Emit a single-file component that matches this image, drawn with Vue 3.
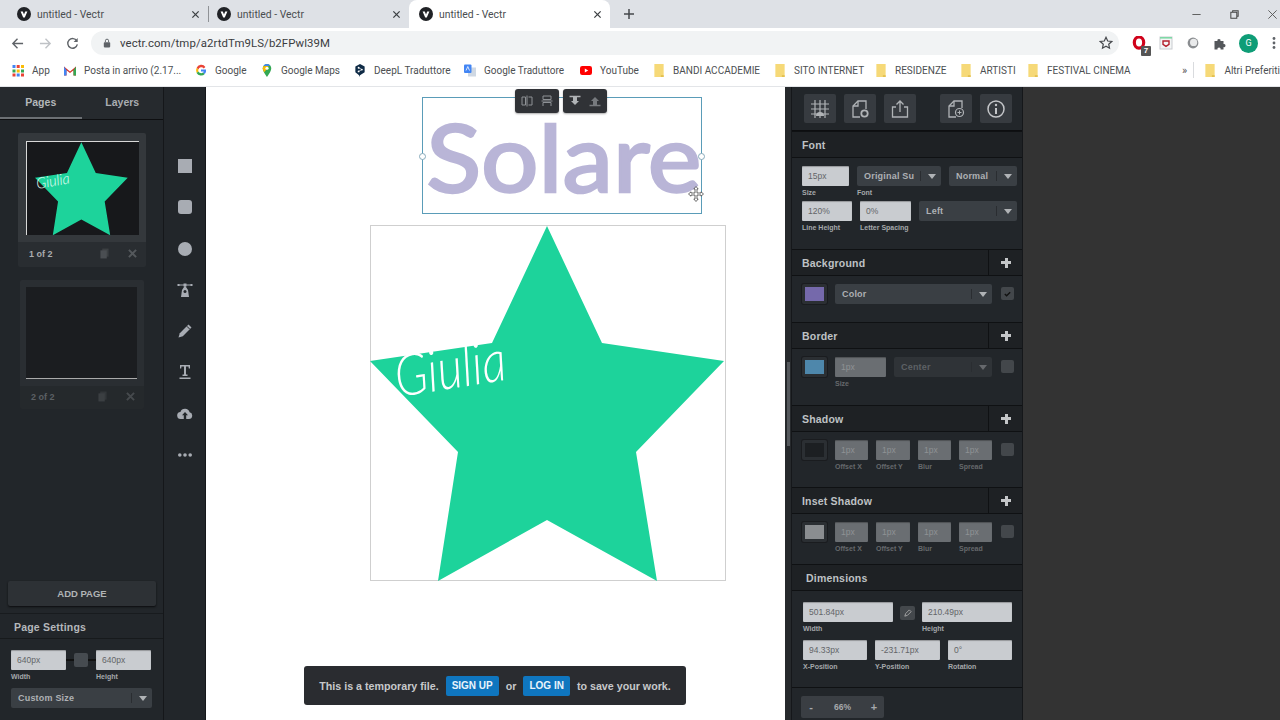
<script setup>
const tabs = [{ active: false }, { active: false }, { active: true }]
const bookmarks = [
  { icon: 'apps', label: 'App', w: 52 },
  { icon: 'gmail', label: 'Posta in arrivo (2.17...', w: 131 },
  { icon: 'g', label: 'Google', w: 66 },
  { icon: 'maps', label: 'Google Maps', w: 93 },
  { icon: 'deepl', label: 'DeepL Traduttore', w: 110 },
  { icon: 'trans', label: 'Google Traduttore', w: 116 },
  { icon: 'yt', label: 'YouTube', w: 73 },
  { icon: 'folder', label: 'BANDI ACCADEMIE', w: 121 },
  { icon: 'folder', label: 'SITO INTERNET', w: 101 },
  { icon: 'folder', label: 'RESIDENZE', w: 85 },
  { icon: 'folder', label: 'ARTISTI', w: 67 },
  { icon: 'folder', label: 'FESTIVAL CINEMA', w: 151 }
]
const shadowFields = [
  { label: 'Offset X', w: 33 },
  { label: 'Offset Y', w: 34 },
  { label: 'Blur', w: 33 },
  { label: 'Spread', w: 33 }
]
const star = '176,0 231,117 353,135 265,226 286,355 176,294 67,355 87,226 -1,135 121,117'
</script>

<template>
  <div class="app">
    <div class="tabbar">
      <div v-for="(t, i) in tabs" :key="i" class="tab" :class="{ active: t.active }">
        <svg class="fav" viewBox="0 0 14 14"><circle cx="7" cy="7" r="7" fill="#202226"/><path d="M3.6 4.4h2.2L7 7.6l1.2-3.2h2.2L7.8 10.4H6.2z" fill="#fff"/></svg>
        <span class="tab-title">untitled - Vectr</span>
        <svg class="tab-x" viewBox="0 0 10 10"><path d="M1.5 1.5l7 7M8.5 1.5l-7 7" stroke="#3c4043" stroke-width="1.4"/></svg>
      </div>
      <svg class="newtab" viewBox="0 0 12 12"><path d="M6 1v10M1 6h10" stroke="#45484c" stroke-width="1.5"/></svg>
      <div class="winctl">
        <svg viewBox="0 0 12 12"><path d="M1.5 6h9" stroke="#555" stroke-width="1"/></svg>
        <svg viewBox="0 0 12 12"><path d="M2 3.5h6.5V10H2zM4 3.5V2h6v6H8.5" fill="none" stroke="#444" stroke-width="1.1"/></svg>
        <svg viewBox="0 0 12 12"><path d="M1.5 1.5l9 9M10.5 1.5l-9 9" stroke="#555" stroke-width="1"/></svg>
      </div>
    </div>

    <div class="toolbar">
      <svg class="nav" viewBox="0 0 14 14"><path d="M13 7H2M7 2L2 7l5 5" fill="none" stroke="#5f6368" stroke-width="1.5"/></svg>
      <svg class="nav fwd" viewBox="0 0 14 14"><path d="M1 7h11M7 2l5 5-5 5" fill="none" stroke="#bfc2c6" stroke-width="1.5"/></svg>
      <svg class="nav rel" viewBox="0 0 14 14"><path d="M11.6 4.2A5.2 5.2 0 1 0 12.2 8" fill="none" stroke="#5f6368" stroke-width="1.5"/><path d="M12.6 1v4.4H8.2z" fill="#5f6368"/></svg>
      <div class="omnibox">
        <svg class="lock" viewBox="0 0 10 12"><rect x="1" y="5" width="8" height="6.5" rx="1" fill="#5f6368"/><path d="M3 5V3.2a2 2 0 0 1 4 0V5" fill="none" stroke="#5f6368" stroke-width="1.2"/></svg>
        <span class="url">vectr.com/tmp/a2rtdTm9LS/b2FPwl39M</span>
        <svg class="star-ic" viewBox="0 0 14 14"><path d="M7 1.3l1.7 3.7 4 .5-3 2.7.8 4L7 10.2l-3.5 2 .8-4-3-2.7 4-.5z" fill="none" stroke="#45484c" stroke-width="1.2"/></svg>
      </div>
      <div class="exts">
        <div class="ext opera">
          <svg viewBox="0 0 14 16"><ellipse cx="7" cy="7" rx="5" ry="6" fill="none" stroke="#d0021b" stroke-width="3.4"/></svg>
          <span class="badge">7</span>
        </div>
        <svg class="ext" viewBox="0 0 14 14"><rect x="1" y="1" width="12" height="12" fill="#f4f6f6" stroke="#c9ccd0"/><path d="M1 1h12v1.6H1z" fill="#7fd8a6"/><path d="M4 5h6v3.4L7 10.4 4 8.4z" fill="none" stroke="#b3202c" stroke-width="1.4"/></svg>
        <svg class="ext" viewBox="0 0 14 14"><circle cx="7" cy="7" r="5.4" fill="#8a8d90"/><circle cx="7.6" cy="6.4" r="3.6" fill="#e9eaeb"/></svg>
        <svg class="ext" viewBox="0 0 14 14"><path d="M1.5 5H4.4a1.6 1.6 0 1 1 3.1 0h3v3a1.6 1.6 0 1 1 0 3.1V13.5H7.6a1.6 1.6 0 1 0-3.1 0H1.5z" fill="#54575b"/></svg>
        <div class="avatar">G</div>
        <svg class="ext menu" viewBox="0 0 4 14"><circle cx="2" cy="2.5" r="1.4" fill="#5f6368"/><circle cx="2" cy="7" r="1.4" fill="#5f6368"/><circle cx="2" cy="11.5" r="1.4" fill="#5f6368"/></svg>
      </div>
    </div>

    <div class="bookmarks">
      <div v-for="b in bookmarks" :key="b.label" class="bm" :style="{ width: b.w + 'px' }">
        <svg v-if="b.icon === 'apps'" class="bm-ic" viewBox="0 0 12 12">
          <g fill="#4285f4"><rect x="0.5" y="0.5" width="3" height="3"/><rect x="9" y="5" width="3" height="3" fill="#34a853"/></g>
          <rect x="4.7" y="0.5" width="3" height="3" fill="#ea4335"/><rect x="9" y="0.5" width="3" height="3" fill="#fbbc05"/>
          <rect x="0.5" y="5" width="3" height="3" fill="#34a853"/><rect x="4.7" y="5" width="3" height="3" fill="#fbbc05"/>
          <rect x="0.5" y="9" width="3" height="3" fill="#ea4335"/><rect x="4.7" y="9" width="3" height="3" fill="#4285f4"/><rect x="9" y="9" width="3" height="3" fill="#ea4335"/>
        </svg>
        <svg v-else-if="b.icon === 'gmail'" class="bm-ic" viewBox="0 0 12 12"><path d="M0 2l6 5 6-5v9H9.5V5.8L6 8.6 2.5 5.8V11H0z" fill="#d93025"/><path d="M0 2v9h2.5V5.8z" fill="#4285f4"/><path d="M12 2v9H9.5V5.8z" fill="#34a853"/></svg>
        <svg v-else-if="b.icon === 'g'" class="bm-ic" viewBox="0 0 12 12"><path d="M10.4 2.4A5 5 0 0 0 1.6 3.6L3.4 5a3 3 0 0 1 5.3-1z" fill="#ea4335"/><path d="M1.6 3.6a5 5 0 0 0 0 4.8L3.4 7a3 3 0 0 1 0-2z" fill="#fbbc05"/><path d="M1.6 8.4a5 5 0 0 0 8.2 1L8 8a3 3 0 0 1-4.6-1z" fill="#34a853"/><path d="M11 5H6v2h2.8A2.6 2.6 0 0 1 8 8l1.8 1.4A5 5 0 0 0 11 5z" fill="#4285f4"/></svg>
        <svg v-else-if="b.icon === 'maps'" class="bm-ic" viewBox="0 0 12 14"><path d="M6 0a4.6 4.6 0 0 0-4.6 4.6C1.4 8 6 14 6 14s4.6-6 4.6-9.4A4.6 4.6 0 0 0 6 0z" fill="#34a853"/><path d="M2 2.4L9.800 2A4.600 4.600 0 0 0 6 0a4.600 4.600 0 0 0-4 2.400z" fill="#4285f4"/><path d="M1.400 4.600c0 1.200.6 2.700 1.500 4.200L8 3 6 2.200 2 2.400z" fill="#fbbc05"/><circle cx="6" cy="4.600" r="1.700" fill="#fff"/></svg>
        <svg v-else-if="b.icon === 'deepl'" class="bm-ic" viewBox="0 0 12 14"><path d="M6 0l5 2.800v6L6 12l-1 2v-2L1 8.800v-6z" fill="#0f2b46"/><circle cx="4.500" cy="4" r="1" fill="#fff"/><circle cx="4.500" cy="8" r="1" fill="#fff"/><circle cx="8" cy="6" r="1" fill="#fff"/><path d="M4.500 4L8 6 4.500 8" fill="none" stroke="#fff" stroke-width=".7"/></svg>
        <svg v-else-if="b.icon === 'trans'" class="bm-ic" viewBox="0 0 12 12"><rect x="4" y="3" width="8" height="9" fill="#cfd8e3"/><rect x="0" y="0" width="7.500" height="8.500" rx="1" fill="#4285f4"/><path d="M2 6l1.800-4L5.500 6" fill="none" stroke="#fff" stroke-width=".8"/></svg>
        <svg v-else-if="b.icon === 'yt'" class="bm-ic" viewBox="0 0 12 12"><rect x="0" y="1.500" width="12" height="9" rx="2.200" fill="#f00"/><path d="M4.800 4l3.400 2-3.400 2z" fill="#fff"/></svg>
        <svg v-else class="bm-ic" viewBox="0 0 12 14"><path d="M1 0h10v14H1z" fill="#f6d978"/><path d="M8 12h3v2H8z" fill="#e3c04f"/></svg>
        <span>{{ b.label }}</span>
      </div>
      <span class="more">»</span>
      <div class="bm-sep"></div>
      <div class="bm">
        <svg class="bm-ic" viewBox="0 0 12 14"><path d="M1 0h10v14H1z" fill="#f6d978"/><path d="M8 12h3v2H8z" fill="#e3c04f"/></svg>
        <span>Altri Preferiti</span>
      </div>
    </div>

    <div class="main">
      <aside class="left">
        <div class="ltabs">
          <div class="ltab on">Pages</div>
          <div class="ltab">Layers</div>
        </div>
        <div class="pages">
          <div class="card">
            <div class="thumb-wrap">
              <div class="thumb">
                <svg class="thumb-star" viewBox="-1 0 355 356">
                  <polygon :points="star" fill="#1dd39b"/>
                  <text x="8" y="178" transform="rotate(-10 8 178) translate(8 178) scale(.95 1) translate(-8 -178)" class="thumb-name">Giulia</text>
                </svg>
              </div>
            </div>
            <div class="card-foot">
              <span>1 of 2</span>
              <svg class="foot-copy" viewBox="0 0 10 12"><rect x="2.500" y="0.500" width="7" height="9" fill="#3c4043"/><rect x="0.500" y="2.500" width="7" height="9" fill="#4a4e52"/></svg>
              <svg class="foot-x" viewBox="0 0 10 10"><path d="M1 1l8 8M9 1l-8 8" stroke="#54585c" stroke-width="2.200"/></svg>
            </div>
          </div>
          <div class="card dim">
            <div class="thumb-wrap">
              <div class="thumb"></div>
            </div>
            <div class="card-foot">
              <span>2 of 2</span>
              <svg class="foot-copy" viewBox="0 0 10 12"><rect x="2.500" y="0.500" width="7" height="9" fill="#3c4043"/><rect x="0.500" y="2.500" width="7" height="9" fill="#4a4e52"/></svg>
              <svg class="foot-x" viewBox="0 0 10 10"><path d="M1 1l8 8M9 1l-8 8" stroke="#54585c" stroke-width="2.200"/></svg>
            </div>
          </div>
        </div>
        <div class="add-wrap"><div class="add">ADD PAGE</div></div>
        <div class="ps-head">Page Settings</div>
        <div class="ps-body">
          <div class="ps-row">
            <div class="col"><div class="fld w56">640px</div><label>Width</label></div>
            <div class="ps-link"><i></i></div>
            <div class="col"><div class="fld w56">640px</div><label>Height</label></div>
          </div>
          <div class="sel ps-sel">Custom Size</div>
        </div>
      </aside>

      <nav class="rail">
        <svg viewBox="0 0 16 16"><rect x="1" y="1" width="14" height="14" fill="#a8acb3"/></svg>
        <svg viewBox="0 0 16 16"><rect x="1" y="1" width="14" height="14" rx="3" fill="#a8acb3"/></svg>
        <svg viewBox="0 0 16 16"><circle cx="8" cy="8" r="7" fill="#a8acb3"/></svg>
        <svg viewBox="0 0 16 16"><path d="M1 3h14" stroke="#a8acb3" stroke-width="1"/><rect x="0.500" y="2" width="2" height="2" fill="#a8acb3"/><rect x="13.500" y="2" width="2" height="2" fill="#a8acb3"/><path d="M8 3.500l3 4.500 1 7H4l1-7z" fill="#a8acb3"/><circle cx="8" cy="9.500" r="1.500" fill="#22262a"/><rect x="6.500" y="1.500" width="3" height="3" fill="#a8acb3"/></svg>
        <svg viewBox="0 0 16 16"><path d="M11.500 1.500l3 3-8.700 8.700-4.300 1.300 1.300-4.300z" fill="#a8acb3"/><path d="M9.800 3.200l3 3" stroke="#22262a" stroke-width="1"/></svg>
        <svg viewBox="0 0 16 16"><path d="M3 1h10v3.500h-1.200L11.500 2.500H9v8h1.500V12h-5v-1.500H7v-8H4.500L4.200 4.500H3z" fill="#a8acb3"/><rect x="2.500" y="13.500" width="11" height="1.500" fill="#a8acb3"/></svg>
        <svg viewBox="0 0 16 16"><path d="M4 13a3.500 3.500 0 0 1-.6-7 4.800 4.800 0 0 1 9.200 0.300A3.400 3.400 0 0 1 12 13z" fill="#a8acb3"/><path d="M8 6l3 3.200H9.200V13H6.800V9.200H5z" fill="#22262a"/></svg>
        <svg viewBox="0 0 16 16"><circle cx="2.800" cy="8" r="1.800" fill="#a8acb3"/><circle cx="8" cy="8" r="1.800" fill="#a8acb3"/><circle cx="13.200" cy="8" r="1.800" fill="#a8acb3"/></svg>
      </nav>

      <div class="canvas">
        <div class="art">
          <svg class="art-star" viewBox="0 0 354 354">
            <polygon :points="star" fill="#1dd39b"/>
            <text x="27" y="171" transform="rotate(-9 27 171) translate(27 171) scale(.83 1) translate(-27 -171)" class="art-name">Giulia</text>
          </svg>
        </div>
        <div class="selbox">
          <span class="solare">Solare</span>
          <i class="handle hl"></i>
          <i class="handle hr"></i>
        </div>
        <div class="float">
          <div class="fgroup">
            <svg viewBox="0 0 12 12"><path d="M1 2h3.500v8H1zM7.500 2H11v8H7.500M6 0.500v11" fill="none" stroke="#8e9195"/></svg>
            <svg viewBox="0 0 12 12"><path d="M2 1h8v3.500H2zM2 11V7.500h8V11M0.500 6h11" fill="none" stroke="#8e9195"/></svg>
          </div>
          <div class="fgroup">
            <svg viewBox="0 0 12 12"><path d="M0.500 1.500h11" stroke="#b0b3b6" stroke-width="1.500"/><path d="M4 2h4v4h2L6 10 2 6h2z" fill="#b0b3b6"/></svg>
            <svg viewBox="0 0 12 12"><path d="M0.500 10.500h11" stroke="#777a7e" stroke-width="1.500"/><path d="M4 10V6H2l4-4 4 4H8v4z" fill="#777a7e"/></svg>
          </div>
        </div>
        <svg class="cursor" viewBox="0 0 16 16"><path d="M8 .5l2.200 2.500H9v4h4V5.800L15.500 8 13 10.200V9H9v4h1.200L8 15.500 5.800 13H7V9H3v1.200L.5 8 3 5.800V7h4V3H5.800z" fill="#fff" stroke="#444" stroke-width=".8"/></svg>
        <div class="notice">
          <span>This is a temporary file.</span>
          <b class="cta su">SIGN UP</b>
          <span>or</span>
          <b class="cta">LOG IN</b>
          <span>to save your work.</span>
        </div>
      </div>

      <div class="scroll"><i></i></div>

      <aside class="right">
        <div class="rtools">
          <div class="rbtn"><svg viewBox="0 0 20 20"><path d="M5 1v18M10 1v18M15 1v18M1 5h18M1 10h18M1 15h18" stroke="#b0b3b6" stroke-width="1.200"/><path d="M6 17a4 4 0 0 1 8 0z" fill="#b0b3b6"/></svg></div>
          <div class="rbtn"><svg viewBox="0 0 20 20"><path d="M10 18H3V7l5-5h8v8" fill="none" stroke="#b0b3b6" stroke-width="1.300"/><path d="M3 7h5V2" fill="none" stroke="#b0b3b6" stroke-width="1.300"/><circle cx="14.500" cy="14.500" r="3.200" fill="none" stroke="#b0b3b6" stroke-width="1.800"/></svg></div>
          <div class="rbtn"><svg viewBox="0 0 20 20"><path d="M6 8H2.500v10h15V8H14" fill="none" stroke="#b0b3b6" stroke-width="1.300"/><path d="M10 13V2M6.500 5.500L10 2l3.500 3.500" fill="none" stroke="#b0b3b6" stroke-width="1.300"/></svg></div>
          <div class="rbtn gap"><svg viewBox="0 0 20 20"><path d="M10 18H3V7l5-5h8v7" fill="none" stroke="#b0b3b6" stroke-width="1.300"/><path d="M3 7h5V2" fill="none" stroke="#b0b3b6" stroke-width="1.300"/><circle cx="13.500" cy="13.500" r="4" fill="none" stroke="#b0b3b6" stroke-width="1.200"/><path d="M13.500 11.500v4M11.500 13.500h4" stroke="#b0b3b6"/></svg></div>
          <div class="rbtn"><svg viewBox="0 0 20 20"><circle cx="10" cy="10" r="8" fill="none" stroke="#c4c6c9" stroke-width="1.500"/><circle cx="10" cy="6" r="1.200" fill="#c4c6c9"/><path d="M10 9v6" stroke="#c4c6c9" stroke-width="2"/></svg></div>
        </div>

        <div class="head">Font</div>
        <div class="body font-b">
          <div class="row">
            <div class="col"><div class="fld" style="width:47px">15px</div><label>Size</label></div>
            <div class="col"><div class="sel" style="width:84px">Original Su</div><label>Font</label></div>
            <div class="col"><div class="sel" style="width:68px">Normal</div></div>
          </div>
          <div class="row">
            <div class="col"><div class="fld" style="width:50px">120%</div><label>Line Height</label></div>
            <div class="col"><div class="fld" style="width:51px">0%</div><label>Letter Spacing</label></div>
            <div class="col"><div class="sel" style="width:98px">Left</div></div>
          </div>
        </div>

        <div class="head plus">Background<em></em></div>
        <div class="body bg-b">
          <div class="row">
            <div class="swatch"><i class="s-purple"></i></div>
            <div class="sel" style="width:157px">Color</div>
            <div class="chk on"><svg viewBox="0 0 10 10"><path d="M2 5.500l2 2 4-4" fill="none" stroke="#111" stroke-width="1.500"/></svg></div>
          </div>
        </div>

        <div class="head plus">Border<em></em></div>
        <div class="body sh-b">
          <div class="row">
            <div class="swatch"><i class="s-blue"></i></div>
            <div class="col"><div class="fld off" style="width:51px">1px</div><label class="l-off">Size</label></div>
            <div class="sel off" style="width:98px">Center</div>
            <div class="chk"></div>
          </div>
        </div>

        <div class="head plus">Shadow<em></em></div>
        <div class="body sh-c">
          <div class="row">
            <div class="swatch"><i class="s-none"></i></div>
            <div v-for="f in shadowFields" :key="f.label" class="col"><div class="fld off" :style="{ width: f.w + 'px' }">1px</div><label class="l-off">{{ f.label }}</label></div>
            <div class="chk"></div>
          </div>
        </div>

        <div class="head plus">Inset Shadow<em></em></div>
        <div class="body inset-b">
          <div class="row">
            <div class="swatch"><i class="s-grey"></i></div>
            <div v-for="f in shadowFields" :key="f.label" class="col"><div class="fld off" :style="{ width: f.w + 'px' }">1px</div><label class="l-off">{{ f.label }}</label></div>
            <div class="chk"></div>
          </div>
        </div>

        <div class="head dim-h">Dimensions</div>
        <div class="body dim-b">
          <div class="row dr">
            <div class="col"><div class="fld" style="width:90px">501.84px</div><label>Width</label></div>
            <div class="link"><svg viewBox="0 0 10 10"><path d="M2 8l1-3 4-4 2 2-4 4z" fill="none" stroke="#aaa"/></svg></div>
            <div class="col"><div class="fld" style="width:90px">210.49px</div><label>Height</label></div>
          </div>
          <div class="row dr">
            <div class="col"><div class="fld" style="width:64px">94.33px</div><label>X-Position</label></div>
            <div class="col"><div class="fld" style="width:65px">-231.71px</div><label>Y-Position</label></div>
            <div class="col"><div class="fld" style="width:64px">0°</div><label>Rotation</label></div>
          </div>
        </div>

        <div class="zoom-sec">
          <div class="zoom">
            <span class="z-btn">-</span>
            <span class="z-val">66%</span>
            <span class="z-btn">+</span>
          </div>
        </div>
      </aside>

      <div class="void"></div>
    </div>
  </div>
</template>

<style scoped>
.app { width: 1280px; height: 720px; overflow: hidden; display: flex; flex-direction: column; font-family: "Liberation Sans", Arial, sans-serif; background: #fff; }

.tabbar { height: 28px; background: #dee1e6; display: flex; align-items: stretch; flex: none; }
.tab { width: 201px; display: flex; align-items: center; padding-left: 9px; box-sizing: border-box; position: relative; border-radius: 8px 8px 0 0; }
.tab:first-child { width: 208px; padding-left: 17px; }
.tab.active { background: #fff; padding-left: 10px; }
.tab:nth-child(2)::before { content: ""; position: absolute; left: 0; top: 6px; bottom: 6px; width: 1px; background: #8f9296; }
.fav { width: 14px; height: 14px; flex: none; }
.tab-title { font: 10.4px Roboto, sans-serif; color: #4a4d50; margin-left: 6px; }
.tab-x { width: 9px; height: 9px; position: absolute; right: 8px; top: 10px; }
.newtab { width: 12px; height: 12px; align-self: center; margin-left: 13px; }
.winctl { margin-left: auto; display: flex; align-items: center; gap: 27px; padding-right: 2px; }
.winctl svg { width: 11px; height: 11px; }

.toolbar { flex: none; background: #fff; display: flex; align-items: center; padding-top: 3px; box-sizing: content-box; height: 24px; }
.nav { width: 13px; height: 13px; flex: none; margin-left: 11px; }
.fwd { margin-left: 15px; }
.rel { margin-left: 14px; }
.omnibox { width: 1028px; height: 24px; margin-left: 12px; background: #f1f3f4; border-radius: 12px; display: flex; align-items: center; padding-left: 12px; box-sizing: border-box; }
.lock { width: 8px; height: 10px; flex: none; }
.url { font: 11.4px Roboto, sans-serif; color: #3a3c3f; margin-left: 9px; letter-spacing: .1px; }
.star-ic { width: 14px; height: 14px; margin-left: auto; margin-right: 6px; }
.exts { display: flex; align-items: center; margin-left: 13px; gap: 13px; }
.ext { width: 14px; height: 14px; flex: none; }
.opera { position: relative; }
.opera svg { width: 14px; height: 15px; display: block; }
.badge { position: absolute; right: -5px; bottom: -6px; width: 10px; height: 10px; background: #555; color: #fff; font: bold 8px/10px "Liberation Sans", sans-serif; text-align: center; border-radius: 1px; }
.avatar { width: 19px; height: 19px; border-radius: 50%; background: #0f9d77; color: #fff; font: 9px/19px Roboto, sans-serif; text-align: center; margin-left: -1px; }
.menu { width: 4px; margin-left: 1px; }

.bookmarks { height: 32px; flex: none; background: #fff; display: flex; align-items: center; padding-left: 12px; padding-bottom: 1px; border-bottom: 1px solid #e3e5e8; box-sizing: border-box; }
.bm { display: flex; align-items: center; font: 10px Roboto, sans-serif; color: #4c4f52; white-space: nowrap; flex: none; }
.bm-ic { width: 12px; height: 13px; flex: none; margin-right: 8px; }
.more { font: 11px Roboto, sans-serif; color: #555; margin-left: 4px; width: 12px; }
.bm-sep { width: 1px; height: 16px; background: #d9dbde; margin: 0 10px 0 0; }

.main { flex: 1; display: flex; min-height: 0; }
.left { width: 164px; flex: none; background: #22262a; display: flex; flex-direction: column; border-right: 1px solid #15171a; box-sizing: border-box; }
.ltabs { height: 32px; display: flex; border-bottom: 1px solid #0e0f11; flex: none; background: #262a2e; }
.ltab { flex: 1; text-align: center; font: bold 10.5px/30px "Liberation Sans", sans-serif; color: #a9adb1; }
.ltab.on { border-bottom: 2px solid #6c7074; color: #b4b7ba; }
.pages { flex: 1; padding: 13px 0 0 18px; }
.card { width: 128px; margin-bottom: 13px; border-radius: 2px; overflow: hidden; }
.card.dim { width: 124px; margin-left: 2px; }
.thumb-wrap { background: #34383c; padding: 8px 7px 7px 8px; }
.dim .thumb-wrap { background: #2a2e32; padding: 7px 7px 7px 6px; }
.thumb { height: 94px; box-sizing: border-box; background: #17181b; border-top: 1px solid #d8d8d8; border-left: 1px solid #d8d8d8; display: flex; justify-content: center; padding-right: 3px; }
.dim .thumb { height: 92px; border-top: none; border-left: none; border-bottom: 1px solid #aaa; background: #1b1d20; }
.thumb-star { width: 93px; height: 94px; display: block; overflow: visible; flex: none; }
.thumb-name { font: italic 300 58px Lato, sans-serif; fill: #e7fff7; }
.card-foot { height: 25px; background: #292d31; display: flex; align-items: center; padding: 0 9px 2px 11px; box-sizing: border-box; font: bold 9px "Liberation Sans", sans-serif; color: #a9acaf; }
.dim .card-foot { height: 23px; background: #25292c; color: #5c6064; }
.foot-copy { width: 9px; height: 11px; margin-left: auto; margin-right: 19px; }
.dim .foot-copy { opacity: .6; }
.foot-x { width: 9px; height: 9px; }
.dim .foot-x { opacity: .7; }
.add-wrap { padding: 0 7px 7px 8px; border-bottom: 1px solid #181b1e; }
.add { height: 25px; background: #2d3135; border-radius: 2px; box-shadow: 0 1px 2px #0b0c0e; text-align: center; font: bold 9.5px/25px "Liberation Sans", sans-serif; color: #b1b4b6; }
.ps-head { height: 24px; font: bold 10.5px/26px "Liberation Sans", sans-serif; color: #b5b8bb; padding-left: 14px; letter-spacing: .2px; border-bottom: 1px solid #171a1c; }
.ps-body { padding: 11px 11px 12px; }
.ps-row { display: flex; height: 38px; }
.ps-link { width: 30px; display: flex; align-items: center; justify-content: center; height: 20px; background: linear-gradient(#0000 9px, #111 9px, #111 11px, #0000 11px); }
.ps-link i { width: 14px; height: 14px; background: #464b50; border-radius: 2px; }
.ps-sel { width: 141px; }
.w56 { width: 55px; }

.rail { width: 42px; flex: none; background: #22262a; border-right: 1px solid #15171a; box-sizing: border-box; display: flex; flex-direction: column; align-items: center; padding-top: 71px; gap: 25.3px; }
.rail svg { width: 16px; height: 16px; flex: none; }

.canvas { width: 579px; flex: none; background: #fff; position: relative; overflow: hidden; }
.art { position: absolute; left: 164px; top: 138px; width: 356px; height: 356px; box-sizing: border-box; border: 1px solid #cfcfcf; background: #fff; }
.art-star { width: 354px; height: 354px; display: block; overflow: visible; }
.art-name { font: italic 300 58px Lato, sans-serif; fill: #fff; }
.selbox { position: absolute; left: 216px; top: 10px; width: 278px; height: 115px; border: 1px solid #5a9cb8; }
.solare { position: absolute; left: 0; top: -1px; font: 94px/117px Lato, "Liberation Sans", sans-serif; color: #b9b5d7; -webkit-text-stroke: 2.5px #b9b5d7; padding-left: 3px; white-space: nowrap; transform: scaleX(1.08); transform-origin: left center; }
.handle { position: absolute; top: 55px; width: 5px; height: 5px; background: #fff; border: 1px solid #8ab; border-radius: 50%; }
.hl { left: -4px; }
.hr { right: -4px; }
.float { position: absolute; left: 309px; top: 2px; display: flex; gap: 4px; }
.fgroup { width: 44px; height: 24px; background: #303236; border-radius: 3px; display: flex; align-items: center; justify-content: space-between; padding: 0 6px; box-sizing: border-box; box-shadow: 0 1px 2px #0005; }
.fgroup svg { width: 12px; height: 12px; }
.cursor { position: absolute; left: 482px; top: 99px; width: 16px; height: 16px; }
.notice { position: absolute; left: 98px; top: 579px; width: 382px; height: 39px; background: #2a2c30; border-radius: 3px; display: flex; align-items: center; justify-content: center; gap: 7px; font: bold 10.7px "Liberation Sans", sans-serif; color: #c6c8ca; box-sizing: border-box; }
.cta { display: block; padding: 0 6px; height: 20px; font-size: 10px; line-height: 20px; background: #0f76bf; border-radius: 2px; color: #eaf4fb; }

.scroll { width: 6px; flex: none; background: #26292c; position: relative; }
.scroll i { position: absolute; left: 2px; top: 275px; width: 3px; height: 84px; background: #54585c; }

.right { width: 232px; flex: none; background: #22262a; border-left: 1px solid #15171a; border-right: 1px solid #15171a; box-sizing: border-box; }
.rtools { height: 44px; display: flex; align-items: flex-start; padding: 7px 0 0 12px; gap: 8px; box-sizing: border-box; border-bottom: 1px solid #0d0e10; }
.rbtn { width: 32px; height: 29px; background: #373b40; border-radius: 2px; display: flex; align-items: center; justify-content: center; }
.rbtn svg { width: 20px; height: 20px; }
.gap { margin-left: 16px; }
.head { height: 27px; box-sizing: border-box; background: #1e2124; border-bottom: 1px solid #0f1113; border-top: 1px solid #0f1113; font: bold 10.5px/27px "Liberation Sans", sans-serif; color: #bfc2c4; padding-left: 10px; letter-spacing: .2px; position: relative; }
.plus em { position: absolute; right: 0; top: 0; bottom: 0; width: 33px; border-left: 1px solid #0f1113; }
.plus em::before { content: ""; position: absolute; left: 12px; top: 11px; width: 10px; height: 3px; background: #c4c6c8; }
.plus em::after { content: ""; position: absolute; left: 15.5px; top: 7.5px; width: 3px; height: 10px; background: #c4c6c8; }
.body { padding: 8px 0 0 10px; box-sizing: border-box; }
.font-b { height: 91px; }
.bg-b { height: 46px; }
.sh-b { height: 56px; }
.sh-c { height: 55px; }
.inset-b { height: 50px; }
.dim-b { height: 97px; padding: 11px 0 0 11px; border-bottom: 1px solid #0f1113; }
.dim-h { padding-left: 14px; line-height: 26px; }
.row { display: flex; gap: 8px; }
.dr { height: 38px; }
.col { display: flex; flex-direction: column; height: 35px; }
.col label { font: bold 7px/9px "Liberation Sans", sans-serif; color: #a5a8ab; margin-top: 2px; white-space: nowrap; }
.col label.l-off { color: #66696c; }
.fld { height: 20px; background: #c9ccd0; border-radius: 1px; font: 8.5px/21px "Liberation Sans", sans-serif; color: #636568; padding-left: 6px; box-sizing: border-box; box-shadow: inset 0 1px 1px #0004; flex: none; }
.fld.off { background: #6a6e72; color: #8f9295; }
.sel { height: 20px; background: #3a3f44; border-radius: 2px; font: bold 9px/20px "Liberation Sans", sans-serif; color: #aeb1b4; padding-left: 7px; box-sizing: border-box; position: relative; flex: none; letter-spacing: .2px; }
.sel::before { content: ""; position: absolute; right: 20px; top: 5px; height: 10px; width: 1px; background: #2a2d31; }
.sel::after { content: ""; position: absolute; right: 5px; top: 8px; border: 4.5px solid transparent; border-top: 5px solid #b0b3b6; border-bottom: 0; }
.sel.off { background: #2f3337; color: #5d6165; }
.sel.off::after { border-top-color: #66696d; }
.swatch { width: 25px; height: 20px; background: #2b2f33; border-radius: 2px; padding: 3px 3px; box-sizing: border-box; flex: none; box-shadow: 0 0 0 1px #1a1c1f; }
.swatch i { display: block; height: 14px; }
.s-purple { background: #7569ab; }
.s-blue { background: #4e87ab; }
.s-none { background: #1c1f22; }
.s-grey { background: #8a8d90; }
.chk { width: 13px; height: 13px; background: #43474b; border-radius: 2px; margin: 3px 0 0 1px; flex: none; display: flex; align-items: center; justify-content: center; }
.chk svg { width: 9px; height: 9px; }
.link { width: 15px; height: 14px; background: #44484c; border-radius: 2px; margin-top: 4px; display: flex; align-items: center; justify-content: center; }
.link svg { width: 9px; height: 9px; }
.dr:first-child { gap: 7px; }
.zoom-sec { padding: 8px 0 0 9px; }
.zoom { width: 83px; height: 22px; background: #3a3e43; border-radius: 2px; display: flex; align-items: center; font: bold 8.5px "Liberation Sans", sans-serif; color: #a6a9ac; }
.z-btn { width: 20px; text-align: center; font-size: 11px; }
.z-val { flex: 1; text-align: center; }
.void { flex: 1; background: #333; }
</style>
